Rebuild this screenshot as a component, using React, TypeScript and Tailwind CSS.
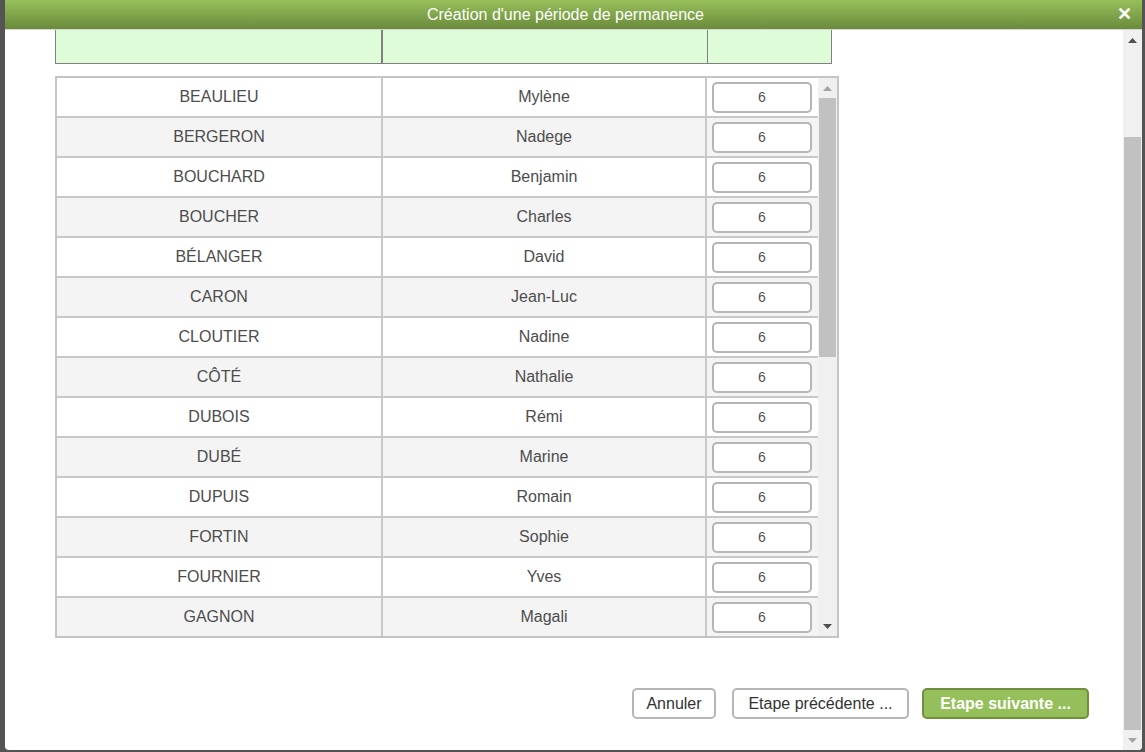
const rows: [string, string][] = [
	["BEAULIEU", "Mylène"],
	["BERGERON", "Nadege"],
	["BOUCHARD", "Benjamin"],
	["BOUCHER", "Charles"],
	["BÉLANGER", "David"],
	["CARON", "Jean-Luc"],
	["CLOUTIER", "Nadine"],
	["CÔTÉ", "Nathalie"],
	["DUBOIS", "Rémi"],
	["DUBÉ", "Marine"],
	["DUPUIS", "Romain"],
	["FORTIN", "Sophie"],
	["FOURNIER", "Yves"],
	["GAGNON", "Magali"],
];

function ArrowUp({ color }: { color: string }) {
	return (
		<svg width="9" height="5" viewBox="0 0 9 5">
			<polygon points="0,5 9,5 4.5,0" fill={color} />
		</svg>
	);
}

function ArrowDown({ color }: { color: string }) {
	return (
		<svg width="9" height="5" viewBox="0 0 9 5">
			<polygon points="0,0 9,0 4.5,5" fill={color} />
		</svg>
	);
}

export default function App() {
	return (
		<div
			className="flex h-[752px] w-[1145px] overflow-hidden bg-[#545454] pl-[5px] pr-[3px]"
			style={{ fontFamily: '"Liberation Sans", Arial, sans-serif' }}
		>
			<div className="flex h-[750px] flex-1 flex-col overflow-hidden rounded-b-[4px] bg-white">
				{/* title */}
				<div className="relative flex h-[29px] shrink-0 items-center justify-center bg-gradient-to-b from-[#97c05b] to-[#6b8b3c] pr-[16px] text-[16px] text-white">
					Création d'une période de permanence
					<span className="absolute right-[10px] top-[5px] text-[18px] font-bold leading-none">
						✕
					</span>
				</div>
				<div className="h-[1px] shrink-0 bg-[#d6d6d6]" />

				<div className="flex min-h-0 flex-1">
					<div className="flex flex-1 flex-col pl-[50px]">
						{/* header (scrolled) */}
						<div className="flex h-[34px] w-[777px] border-x border-b border-[#808080] bg-[#dffcd9]">
							<div className="w-[327px] border-r-2 border-[#808080]" />
							<div className="w-[325px] border-r border-[#808080]" />
							<div className="flex-1" />
						</div>

						{/* data table */}
						<div className="mt-[12px] flex h-[562px] w-[784px] border-2 border-[#c4c4c4]">
							<div className="flex h-full w-[761px] flex-col overflow-hidden">
								{rows.map(([nom, prenom], i) => (
									<div
										key={nom}
										className={
											"flex h-[40px] shrink-0 border-b-2 border-[#c8c8c8] text-[16px] text-[#4d4d4d] " +
											(i % 2 ? "bg-[#f4f4f4]" : "bg-white")
										}
									>
										<div className="flex w-[326px] items-center justify-center border-r-2 border-[#c8c8c8]">
											{nom}
										</div>
										<div className="flex w-[324px] items-center justify-center border-r-2 border-[#c8c8c8]">
											{prenom}
										</div>
										<div className="flex flex-1 items-center pl-[5px]">
											<div className="flex h-[31px] w-[100px] items-center justify-center rounded-[5px] border-2 border-[#b6b6b6] bg-white text-[14px] text-[#555]">
												6
											</div>
										</div>
									</div>
								))}
							</div>
							{/* inner scrollbar */}
							<div className="flex w-[19px] flex-col items-center bg-[#f0f0f0]">
								<div className="flex h-[20px] items-center justify-center">
									<ArrowUp color="#a3a3a3" />
								</div>
								<div className="h-[259px] w-[17px] bg-[#c1c1c1]" />
								<div className="flex-1" />
								<div className="flex h-[20px] items-center justify-center">
									<ArrowDown color="#505050" />
								</div>
							</div>
						</div>

						{/* buttons */}
						<div className="mt-[50px] flex justify-end gap-[16px] pr-[34px] text-[16px]">
							<button className="h-[31px] w-[84px] rounded-[5px] border-2 border-[#b6b6b6] bg-white text-[#333]">
								Annuler
							</button>
							<button className="h-[31px] w-[177px] rounded-[5px] border-2 border-[#b6b6b6] bg-white text-[#333]">
								Etape précédente ...
							</button>
							<button className="-ml-[3px] h-[31px] w-[167px] rounded-[5px] border-2 border-[#6d8f3e] bg-[#95bf5a] font-bold text-white">
								Etape suivante ...
							</button>
						</div>
					</div>

					{/* outer scrollbar */}
					<div className="flex w-[19px] shrink-0 flex-col items-center bg-[#f0f0f0]">
						<div className="flex h-[20px] items-center justify-center">
							<ArrowUp color="#505050" />
						</div>
						<div className="h-[87px]" />
						<div className="h-[593px] w-[17px] bg-[#c1c1c1]" />
						<div className="flex-1" />
						<div className="flex h-[20px] items-center justify-center">
							<ArrowDown color="#a3a3a3" />
						</div>
					</div>
				</div>
			</div>
		</div>
	);
}
